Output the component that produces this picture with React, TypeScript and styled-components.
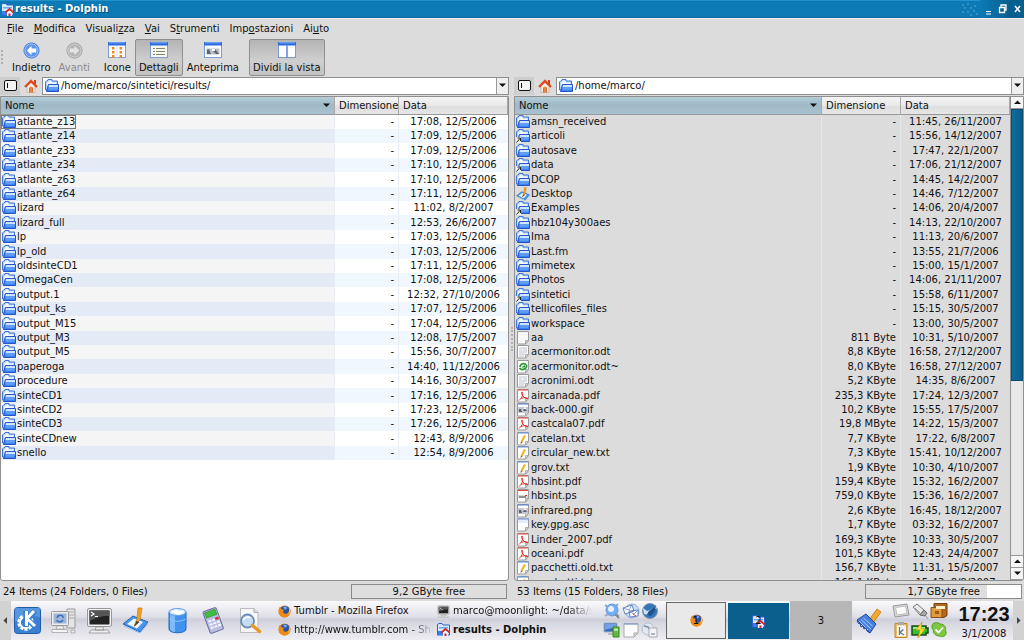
import React from 'react';
import styled, { createGlobalStyle, css } from 'styled-components';

const GlobalStyle = createGlobalStyle`
  *, *::before, *::after { box-sizing: border-box; }
  html, body { margin: 0; height: 100%; }
  #root { height: 100%; }
  body {
    background: #dcdcdc;
    color: #111;
    font: 10px/14px "DejaVu Sans", sans-serif;
    overflow: hidden;
  }
  button, input { font: inherit; color: inherit; }
  svg { display: block; flex: none; }
`;

const bare = css`
  appearance: none;
  border: 0;
  margin: 0;
  padding: 0;
  background: transparent;
`;

/* ---------- icons ---------- */

type IconProps = { size?: number };

const FolderIcon = ({ size = 14, link = false }: IconProps & { link?: boolean }) => (
  <svg width={size} height={size} viewBox="0 0 14 14">
    <path d="M.5 11V3L2 1.500h1V.5h4v1.500h5.500V11z" fill="#b4d6fb" stroke="#4274d8" />
    <path d="M2 3.500h1.500v-2h2.500l1 2h4.500V6H2z" fill="#f4faff" />
    <path d="M1.500 12.500 3.500 5.500h10v7z" fill="#3b82f4" stroke="#2454c8" />
    <path d="M4 6h9v2H3.500z" fill="#cfe5ff" />
    <path d="M3.500 8.500H13v1H3.300z" fill="#85b8fb" />
    <path d="M4 10.500h8" stroke="#5c9cf8" />
    {link && (
      <g>
        <path d="M0 8h5v6H0z" fill="#e8eefa" />
        <path d="M.5 13.500 4 9.500M1.500 9H4.500V12" stroke="#222" fill="none" />
      </g>
    )}
  </svg>
);

const PageBase = ({ children, fill = '#fff' }: { children?: React.ReactNode; fill?: string }) => (
  <svg width="14" height="14" viewBox="0 0 14 14">
    <path d="M1.500.5h11v9l-3 3.500h-8z" fill={fill} stroke="#9a9a9a" />
    <path d="M9.500 13V9.500h3z" fill="#d8d8d8" stroke="#9a9a9a" strokeWidth=".7" />
    {children}
  </svg>
);

const FileIcon = ({ kind }: { kind: string }) => {
  switch (kind) {
    case 'link':
      return <FolderIcon link />;
    case 'desktop':
      return <SketchIcon size={14} />;
    case 'plain':
      return <PageBase fill="#f8f8f8" />;
    case 'asc':
      return (
        <PageBase>
          <path d="M1 1h11.500" stroke="#8fa9d8" strokeWidth="1.500" />
          <path d="M2 2h10v3H2z" fill="#e6ecf8" />
        </PageBase>
      );
    case 'odt':
      return (
        <PageBase>
          <path d="M3 3h8M3 5h3M7 5h4M3 7h8M3 9h6M3 11h5" stroke="#b3bcc8" strokeWidth=".9" />
        </PageBase>
      );
    case 'backup':
      return (
        <PageBase>
          <path d="M4 7c0-3.500 5-4.500 6-2M10.500 5c1 4-5 6-7 3" stroke="#2b9a35" strokeWidth="1.700" fill="none" />
          <path d="M5 7.500h4V5z" fill="#2b9a35" />
        </PageBase>
      );
    case 'pdf':
      return (
        <PageBase>
          <path d="M2 1h10" stroke="#e0453a" />
          <path d="M3 11.500C5.500 9 7.500 6 6.500 3.500c-.5-1.500-1.500 0-.5 2S9.500 10 11.500 9.500c1-.8-3-1.500-6.500 0" stroke="#e02a20" fill="none" />
        </PageBase>
      );
    case 'image':
      return (
        <PageBase>
          <path d="M1.500 1h11" stroke="#4e7fd6" />
          <path d="M2 4h10v6H2z" fill="#c3c8d1" />
          <path d="M3 9V6h2l1 3zM7 8l1.500-3L11 8z" fill="#5a5f6c" />
          <path d="M8 4.500h2V6H8z" fill="#fff" />
        </PageBase>
      );
    case 'ps':
      return (
        <PageBase>
          <path d="M2 1.500h10" stroke="#e0453a" />
          <path d="M2 6h10v3H2z" fill="#dadada" />
          <path d="M3 8h7" stroke="#444" />
          <path d="M9 6.500h2" stroke="#d33" />
        </PageBase>
      );
    case 'text':
      return (
        <PageBase>
          <path d="M1.500 1h11" stroke="#5e8fe0" />
          <path d="M5.500 10 9 3.500" stroke="#f0b32a" strokeWidth="2.200" />
          <path d="M4.500 12 5 9.500l1.500 1z" fill="#7a5a2a" />
        </PageBase>
      );
    default:
      return <FolderIcon />;
  }
};

const DolphinIcon = ({ size = 13 }: IconProps) => (
  <svg width={size} height={size} viewBox="0 0 13 13">
    <path d="M.5 12V1.500L2 .5h3l1 1.500h6.500v10z" fill="#d7e8ff" stroke="#2b62d0" />
    <path d="M2 4h9v1.500H2z" fill="#6ea6f5" />
    <path d="M1 8h5v4H1z" fill="#3d7cf0" />
    <path d="M4.500 9.500 8.500 6l4 3.500" stroke="#d42a1e" strokeWidth="1.800" fill="none" />
    <path d="M6 9.500 8.500 7.500 11 9.500V13H6z" fill="#f5f5f5" />
    <path d="M7.500 10.500h2V13h-2z" fill="#c23" />
  </svg>
);

const HomeIcon = () => (
  <svg width="14" height="14" viewBox="0 0 14 14">
    <path d="M10 1h2v4h-2z" fill="#c5441f" />
    <path d="M3 7v6.500h8V7L7 3.500z" fill="#f4ede6" stroke="#b9a08e" strokeWidth=".6" />
    <path d="M1 8 7 2l6 6" stroke="#e0481c" strokeWidth="2.300" fill="none" />
    <path d="M5 13.500V9.500c0-2.500 4-2.500 4 0v4z" fill="#d9662a" />
    <path d="M7 8v5.500" stroke="#f5ab62" />
  </svg>
);

const PanelToggleIcon = () => (
  <svg width="13" height="11" viewBox="0 0 13 11">
    <rect x=".5" y=".5" width="12" height="10" rx="1.500" fill="#f4f4f4" stroke="#111" />
    <path d="M3.500 3v5" stroke="#111" />
  </svg>
);

const ArrowCircle = ({ forward = false }: { forward?: boolean }) => (
  <svg width="17" height="17" viewBox="0 0 18 18">
    <circle cx="9" cy="9" r="8" fill={forward ? '#b4b4b4' : '#5a94ee'} stroke={forward ? '#999' : '#3b6cd0'} />
    <circle cx="9" cy="9" r="7" fill="none" stroke={forward ? '#d6d6d6' : '#a9cbf9'} />
    <path
      d="M9 4 4 9l5 5v-3h5V7H9z"
      fill={forward ? '#e4e4e4' : '#fff'}
      transform={forward ? 'rotate(180 9 9)' : undefined}
    />
  </svg>
);

const ViewIcon = ({ mode }: { mode: 'icons' | 'details' | 'preview' | 'split' }) => (
  <svg width="18" height="17" viewBox="0 0 18 17">
    <rect x=".5" y=".5" width="17" height="15" fill={mode === 'details' ? '#f7f7ee' : '#fdfdff'} stroke="#7f9ccf" />
    <path d="M0 0h18v3.500H0z" fill="#2c6ae0" />
    <path d="M1 .8h16" stroke="#7fb0f8" />
    {mode === 'icons' && (
      <g fill="#ec8a22">
        {[5, 9, 13].map((y) => (
          <g key={y}>
            <path d={`M4 ${y}h2.500v2.500H4z`} />
            <path d={`M11.500 ${y}h2.500v2.500h-2.500z`} />
          </g>
        ))}
        <path d="M9 4v12" stroke="#cdd9ef" />
      </g>
    )}
    {mode === 'details' && (
      <path d="M3 6.500h2M6 6.500h9M3 9.500h2M6 9.500h9M3 12.500h2M6 12.500h9" stroke="#7b8570" strokeWidth="1.200" />
    )}
    {mode === 'preview' && (
      <g>
        <path d="M2.500 6.500h13v6h-13z" fill="#b9bec8" />
        <path d="M3 12V8l2-1 1 3 1 2zM9 9l2-2 4 5h-3z" fill="#5d6270" />
        <path d="M8 7h3v2H8z" fill="#fff" />
      </g>
    )}
    {mode === 'split' && <path d="M9 3.500V16" stroke="#5a86dc" strokeWidth="1.500" />}
  </svg>
);

const SketchIcon = ({ size = 27 }: IconProps) => (
  <svg width={size} height={size} viewBox="0 0 27 27">
    <path d="M1 17 11 9l15 6-8 10z" fill="#4a94ea" stroke="#2466b8" />
    <path d="M5 17l7-5.500 9 3.500-6 6.500z" fill="#eef7ff" />
    <path d="M2 19l16 7 8-9" stroke="#8cc2fa" fill="none" />
    <path d="M12 19 15 12 16 1h4l-2 12z" fill="#f2a122" stroke="#c87a12" strokeWidth=".7" />
    <path d="M12 20l2.500-6 3 1z" fill="#4b4038" />
  </svg>
);

const KMenuIcon = () => (
  <svg width="27" height="27" viewBox="0 0 27 27">
    <rect x=".5" y=".5" width="26" height="26" rx="3" fill="#3a7fd2" stroke="#215aa6" />
    <path d="M1 1h25v9C16 8 8 10 1 15z" fill="#6aa7e8" opacity=".6" />
    <circle cx="11.500" cy="15.500" r="7" fill="none" stroke="#fff" strokeWidth="2.500" strokeDasharray="3.200 1.200" />
    <circle cx="11.500" cy="15.500" r="5.500" fill="none" stroke="#fff" strokeWidth="1.800" />
    <path d="M12 4v16M21 4l-8 8 9 8" stroke="#3a7fd2" strokeWidth="5.500" fill="none" />
    <path d="M12.500 4v15M20 4l-7 7.500 8 7.500" stroke="#fff" strokeWidth="3" fill="none" />
  </svg>
);

const ComputerIcon = () => (
  <svg width="27" height="27" viewBox="0 0 27 27">
    <path d="M17 2h8v19h-8z" fill="#e4e4e4" stroke="#9b9b9b" />
    <path d="M18 5h6M18 8h6M18 11h6" stroke="#aaa" />
    <rect x="1.500" y="4.500" width="17" height="14" rx="1" fill="#ececec" stroke="#9b9b9b" />
    <path d="M3.500 6.500h13v10h-13z" fill="#9db6d8" />
    <path d="M7 11c1-4 7-3 6 0M13 13c-2 3-6 2-6 0" stroke="#3e6cb8" strokeWidth="1.500" fill="none" />
    <path d="M7 19h6l1 3H6zM2 22.500h15l1 3H2z" fill="#f3f3f3" stroke="#9b9b9b" strokeWidth=".7" />
    <path d="M21 23h4v3h-4z" fill="#e6e6e6" stroke="#9b9b9b" strokeWidth=".7" />
  </svg>
);

const TerminalIcon = ({ size = 27 }: IconProps) => (
  <svg width={size} height={size} viewBox="0 0 27 27">
    <rect x="1.500" y="1.500" width="24" height="18" rx="1.500" fill="#f0f0f0" stroke="#999" />
    <path d="M3.500 3.500h20v14h-20z" fill="#222" />
    <path d="M3.500 3.500h20V9c-9 0-14 2-20 5z" fill="#555" />
    <path d="M5 5l3 2-3 2M9 9.500h3" stroke="#fff" fill="none" strokeWidth="1.200" />
    <path d="M10 20h7l1 3H9zM5 23h17l2 3H3z" fill="#eee" stroke="#888" strokeWidth=".7" />
  </svg>
);

const TrashIcon = () => (
  <svg width="27" height="27" viewBox="0 0 27 27">
    <path d="M5 5v17c0 5 17 5 17 0V5z" fill="#3f93ee" stroke="#1e66c0" />
    <path d="M6 6v16c0 2 3 3 5 3V8z" fill="#8cc6ff" opacity=".8" />
    <ellipse cx="13.500" cy="5" rx="8.500" ry="3.500" fill="#cfe6fb" stroke="#5b9de0" />
    <path d="M7 5l5-3 3 2 4-1 1 3-6 2z" fill="#fff" />
    <path d="M5.500 12c4 3 12 3 16 0" stroke="#8cc6ff" fill="none" />
  </svg>
);

const CalculatorIcon = () => (
  <svg width="27" height="27" viewBox="0 0 27 27">
    <g transform="rotate(-20 13 13)">
      <rect x="6" y="2" width="14" height="23" rx="1.500" fill="#b9bfe2" stroke="#6a6f9c" />
      <path d="M7.500 3.500h11V9h-11z" fill="#3fbf3f" stroke="#2a8a2a" strokeWidth=".6" />
      <path d="M8 12h3v2H8zM12 12h3v2h-3zM8 15.500h3v2H8zM12 15.500h3v2h-3zM16 15.500h3v2h-3zM8 19h3v2H8zM12 19h3v2h-3zM16 19h3v2h-3z" fill="#f5f5ff" />
      <path d="M15.500 11.500h3.500v2.500h-3.500z" fill="#e22a3c" />
    </g>
  </svg>
);

const SearchIcon = () => (
  <svg width="27" height="27" viewBox="0 0 27 27">
    <path d="M4.500 1.500H18l4 4v20H4.500z" fill="#f7f7f9" stroke="#bbb" />
    <path d="M18 1.500v4h4" fill="#ddd" stroke="#aaa" />
    <circle cx="11.500" cy="14" r="6.500" fill="#c4dcf4" stroke="#6f8db0" strokeWidth="1.800" />
    <path d="M7.500 13c1-3 5-4 7-2" stroke="#fff" strokeWidth="1.500" fill="none" />
    <path d="M16.500 18.500l7 6" stroke="#e79a26" strokeWidth="3.500" strokeLinecap="round" />
  </svg>
);

const FirefoxIcon = () => (
  <svg width="13" height="13" viewBox="0 0 13 13">
    <circle cx="6.500" cy="6.500" r="6" fill="#e4700f" />
    <circle cx="7" cy="5" r="4" fill="#2553a8" />
    <path d="M5 2c2-1 4 0 4.500 1L7 5z" fill="#6ea6e6" />
    <path d="M.8 4 2 2l1 2 3 1-1 2 2 2 4-1 1.500-4C13 9 10 12.500 6.500 12.500S0 9 .8 4z" fill="#ef8a17" />
    <path d="M11 2.500c2 3 1.500 6-1 7.500 1-3 1.500-5 1-7.500z" fill="#f9c741" />
  </svg>
);

const KonquerorIcon = () => (
  <svg width="18" height="18" viewBox="0 0 18 18">
    <path d="M2 3l3 2M15 2l-3 3M2 14l3-2M16 14l-3-2" stroke="#8fa8cc" strokeWidth="2" />
    <circle cx="9" cy="8" r="6" fill="#72b0f2" stroke="#6a9ad8" />
    <circle cx="8" cy="7" r="3" fill="#e6f3ff" />
    <path d="M12 12l4 4" stroke="#888" strokeWidth="2" />
  </svg>
);
const MailIcon = () => (
  <svg width="18" height="18" viewBox="0 0 18 18">
    <circle cx="10" cy="9" r="7" fill="#c8e0f6" stroke="#8fb0d8" />
    <path d="M1 6l9-3 2 6-9 3zM7 9l9-1v6l-8 1z" fill="#f8f9ff" stroke="#4c6cae" strokeWidth=".8" />
    <path d="M1 6l6 2 3-5M7 9l5 3 4-4" stroke="#6a8ad0" fill="none" strokeWidth=".8" />
    <path d="M11 12l3 2" stroke="#d55" />
  </svg>
);
const BirdIcon = () => (
  <svg width="18" height="18" viewBox="0 0 18 18">
    <circle cx="9" cy="9" r="7.500" fill="#3676b8" stroke="#7b95ae" />
    <path d="M2 6l4 3 3-1 6-5 1 3-5 3-3 4-5-1z" fill="#cfe2f4" />
    <path d="M7 10l8-7-1 6-4 5-4-1z" fill="#20548c" />
  </svg>
);
const MonitorsIcon = () => (
  <svg width="18" height="18" viewBox="0 0 18 18">
    <path d="M1 2h13v9H1z" fill="#3469b8" stroke="#a7b4c6" />
    <path d="M2 3h11v3L2 9z" fill="#6fa2e4" />
    <path d="M5 12h5v2H5z" fill="#bbb" />
    <path d="M10 6h6v10h-6z" fill="#61b83c" stroke="#3c8824" />
    <path d="M11 7.500h4V10h-4z" fill="#b6e89c" />
  </svg>
);
const NoteIcon = () => (
  <svg width="18" height="18" viewBox="0 0 18 18">
    <path d="M2 2.500h14V12l-4 4H2z" fill="#fcfcfc" stroke="#aaa" />
    <path d="M2 3h14" stroke="#8ba6cc" strokeWidth="1.500" />
    <path d="M12 16v-4h4z" fill="#ddd" stroke="#aaa" />
  </svg>
);
const OfficeIcon = () => (
  <svg width="18" height="18" viewBox="0 0 18 18">
    <circle cx="7" cy="8" r="6" fill="#e2e8ee" stroke="#b5c0cc" />
    <path d="M3 5l4 1 2 3 3-1" stroke="#7890ac" strokeWidth="1.500" fill="none" />
    <path d="M8 7h8v9H8z" fill="#f4f4f4" stroke="#aaa" />
    <path d="M10 12h4v2h-4z" fill="#aab6c4" />
  </svg>
);

const BroomIcon = () => (
  <svg width="27" height="27" viewBox="0 0 27 27">
    <path d="M14 13 22 2l4 3-8 11z" fill="#f2a82a" stroke="#bf7b12" strokeWidth=".8" />
    <path d="M2 13 11 7l10 10-6 9z" fill="#4a80de" stroke="#1e469e" />
    <path d="M4 14l9 9M6 12.500l10 9.500M8.500 11l9 8" stroke="#a9caf8" />
    <path d="M2 14l2 3 1-1 1 4 2-1 1 3 2-1 1 3 3 2" stroke="#1e469e" fill="none" />
  </svg>
);
const TabletIcon = () => (
  <svg width="18" height="18" viewBox="0 0 18 18">
    <path d="M1 4l14-2 2 11-14 2z" fill="#ddd" stroke="#999" />
    <path d="M3.500 5.500l10-1.500 1.500 7.500-10 1.500z" fill="#fcfcfc" stroke="#bbb" />
  </svg>
);
const PlugIcon = () => (
  <svg width="18" height="18" viewBox="0 0 18 18">
    <path d="M2 5l4-3 7 6-4 5z" fill="#e9e9e9" stroke="#777" />
    <path d="M9 13l4-5 3 3-2 3z" fill="#aaa" stroke="#666" />
    <path d="M4 6l5 5M15 14l2 3" stroke="#999" />
  </svg>
);
const WalletIcon = () => (
  <svg width="18" height="18" viewBox="0 0 18 18">
    <path d="M4 1.500h13v12l-3 2H4z" fill="#b8671a" stroke="#744010" />
    <path d="M1 5.500h11v10H1z" fill="#e39a3c" stroke="#8a5116" />
    <path d="M6 4h9v3H6z" fill="#fff1cf" />
    <path d="M5 9h4v3H5z" fill="#9c5b17" />
  </svg>
);
const ClipboardIcon = () => (
  <svg width="18" height="18" viewBox="0 0 18 18">
    <path d="M3 2.500h12v14H3z" fill="#efbd62" stroke="#bd8627" />
    <path d="M5 4.500h9v11H5z" fill="#fafafa" />
    <path d="M6 1h6v3H6z" fill="#aaa" />
    <path d="M7.500 6v8M11.500 8.500l-3.500 3 4 2.500" stroke="#66748c" strokeWidth="1.300" fill="none" />
  </svg>
);
const BatteryIcon = () => (
  <svg width="18" height="18" viewBox="0 0 18 18">
    <path d="M1 5h14v2h2v5h-2v2H1z" fill="#37c02d" stroke="#1b4d18" strokeWidth="1.500" />
    <path d="M2 6h12v2H2z" fill="#9aec8a" />
    <path d="M11 1 5 9h4l-2 8 7-9h-4z" fill="#ffe136" stroke="#c29212" strokeWidth=".7" />
  </svg>
);
const SkypeIcon = () => (
  <svg width="18" height="18" viewBox="0 0 18 18">
    <path d="M2 5c0-4 6-4 8-2 5 0 6 4 5.500 6.500C18 14 13 17 10 15 5 15 3 12 3.500 9 2 8 2 6 2 5z" fill="#7cc840" stroke="#55a022" />
    <path d="M5.500 8.500l3 3 4.500-5" stroke="#fff" strokeWidth="1.800" fill="none" />
  </svg>
);

const Sparkles = () => (
  <svg width="18" height="14" viewBox="0 0 18 14">
    <path
      d="M1 2h2v2H1zM6 1h2v2H6zM3 5h2v2H3zM9 5h2v2H9zM13 3h2v2h-2zM1 9h2v2H1zM6 9h2v2H6zM12 8h2v2h-2zM15 11h2v2h-2zM9 12h2v2H9z"
      fill="#3c9cc8"
      opacity=".7"
    />
  </svg>
);

const Triangle = ({ dir = 'down' }: { dir?: 'down' | 'up' | 'left' | 'right' }) => {
  const d = { down: 'M0 1.500h7L3.500 5z', up: 'M0 5h7L3.500 1.500z', left: 'M5 0v7L1.500 3.500z', right: 'M2 0v7l3.500-3.500z' }[dir];
  return (
    <svg width="7" height="7" viewBox="0 0 7 7">
      <path d={d} fill="currentColor" />
    </svg>
  );
};

/* ---------- window frame ---------- */

const Desktop = styled.div`
  display: flex;
  flex-direction: column;
  height: 100vh;
`;

const TitleBar = styled.header`
  display: flex;
  align-items: center;
  flex: none;
  height: 18px;
  padding-left: 1px;
  gap: 1px;
  background: linear-gradient(#2192cb 0 1px, #0c7bb5 1px 16px, #0a6ba0);
  color: #fff;
`;

const Title = styled.h1`
  flex: 1;
  margin: 0;
  font-size: 10px;
  line-height: 16px;
  text-shadow: 1px 1px 0 #0a4f76;
`;

const WindowButtons = styled.div`
  display: flex;
  align-items: center;
  align-self: stretch;
  padding: 0 2px 0 4px;
  gap: 4px;
  background: linear-gradient(90deg, #0c7bb5, #075f90 30px);
`;

const WindowButton = styled.button`
  ${bare}
  width: 10px;
  height: 12px;
`;

const MenuBar = styled.nav`
  display: flex;
  flex: none;
  height: 20px;
  padding-left: 2px;
  border-top: 1px solid #efefef;
`;

const MenuItem = styled.button`
  ${bare}
  padding: 0 5px;
`;

const ToolBar = styled.div`
  display: flex;
  flex: none;
  height: 38px;
  padding: 1px 0 0 1px;
`;

const Grip = styled.span`
  width: 7px;
  height: 14px;
  margin-top: 11px;
  border-left: 2px dotted #b0b0b0;
`;

const ToolButton = styled.button<{ $active?: boolean; $muted?: boolean; $spaced?: boolean }>`
  ${bare}
  display: flex;
  flex-direction: column;
  align-items: center;
  height: 37px;
  padding: 2px 3px 0;
  gap: 3px;
  border: 1px solid transparent;
  border-radius: 2px;
  line-height: 12px;
  margin-left: ${(p) => (p.$spaced ? '6px' : '0')};
  color: ${(p) => (p.$muted ? '#8a8a8a' : '#111')};
  ${(p) =>
    p.$active &&
    css`
      border-color: #8e8e8e;
      background: linear-gradient(#b4b4b4, #cfcfcf 60%, #c2c2c2);
    `}
`;

/* ---------- panes ---------- */

const Panes = styled.main`
  display: grid;
  grid-template-columns: minmax(0, 509fr) 5px minmax(0, 510fr);
  flex: 1;
  min-height: 0;
`;

const Splitter = styled.div`
  display: flex;
  align-items: center;
  justify-content: center;
  &::before {
    content: '';
    height: 24px;
    border-left: 2px dotted #b0b0b0;
  }
`;

const Pane = styled.section`
  display: flex;
  flex-direction: column;
  min-height: 0;
`;

const PathBar = styled.div`
  display: flex;
  align-items: center;
  flex: none;
  height: 20px;
  padding-bottom: 1px;
`;

const SquareButton = styled.button<{ $pressed?: boolean }>`
  ${bare}
  display: flex;
  align-items: center;
  justify-content: center;
  width: ${(p) => (p.$pressed ? '20px' : '22px')};
  height: 18px;
  background: ${(p) => (p.$pressed ? '#cecece' : 'transparent')};
`;

const PathField = styled.label`
  display: flex;
  align-items: center;
  flex: 1;
  height: 18px;
  padding-left: 2px;
  gap: 2px;
  border: 1px solid #8f8f8f;
  background: #fff;
`;

const PathInput = styled.input`
  ${bare}
  flex: 1;
  min-width: 0;
  line-height: 14px;
`;

const DropButton = styled.button`
  ${bare}
  display: flex;
  align-items: center;
  justify-content: center;
  align-self: stretch;
  width: 12px;
  border-left: 1px solid #999;
  background: #efefef;
`;

const ListFrame = styled.div<{ $inactive?: boolean }>`
  display: flex;
  flex: 1;
  min-height: 0;
  border: 1px solid #8f8f8f;
  border-radius: 0 0 3px 3px;
  background: ${(p) => (p.$inactive ? '#dcdcdc' : '#fff')};
`;

const TableArea = styled.div`
  flex: 1;
  min-width: 0;
  overflow: hidden;
`;

const FileTable = styled.table<{ $inactive?: boolean }>`
  width: 100%;
  table-layout: fixed;
  border-collapse: separate;
  border-spacing: 0;
  white-space: nowrap;

  td {
    height: 14px;
    padding: 0;
    overflow: hidden;
    border-right: 1px solid ${(p) => (p.$inactive ? '#e6e6e6' : '#e9eef4')};
    line-height: 14px;
  }
  td:last-child { border-right: 0; }
  tbody tr:nth-child(5n + 3) td,
  tbody tr:nth-child(5n + 5) td { height: 15px; }

  ${(p) =>
    !p.$inactive &&
    css`
      td:first-child { background: #f5f5f5; }
      tbody tr:nth-child(even) td { background: #f0f7ff; }
      tbody tr:nth-child(even) td:first-child { background: #e4ebf6; }
    `}
`;

const HeadCell = styled.th<{ $sorted?: boolean }>`
  height: 18px;
  padding: 0 ${(p) => (p.$sorted ? '4px' : '0')} 0 4px;
  border-right: 1px solid #a8a8a8;
  border-bottom: 1px solid #989898;
  background: ${(p) =>
    p.$sorted
      ? 'linear-gradient(#b4ccd8, #9fb9c7 45%, #a9c2cf)'
      : 'linear-gradient(#f4f4f4, #e9e9e9 50%, #dedede 55%, #e6e6e6)'};
  font-weight: normal;
  line-height: 14px;
  text-align: left;
`;

const HeadLabel = styled.span`
  display: flex;
  align-items: center;
  justify-content: space-between;
`;

const NameCell = styled.span<{ $focused?: boolean }>`
  display: inline-flex;
  align-items: center;
  height: 14px;
  padding: 0 1px;
  gap: 1px;
  vertical-align: top;
  outline: ${(p) => (p.$focused ? '1px solid #777' : '0')};
  outline-offset: -1px;
`;

const SizeCell = styled.td`
  && { padding-right: 4px; }
  text-align: right;
`;

const DateCell = styled.td`
  text-align: center;
`;

const ScrollBar = styled.div`
  display: flex;
  flex-direction: column;
  width: 13px;
  border-left: 1px solid #8f8f8f;
  background: #e8e8e8;
`;

const ScrollButton = styled.button`
  ${bare}
  display: flex;
  align-items: center;
  justify-content: center;
  flex: none;
  height: 12px;
  border-bottom: 1px solid #999;
  background: #f6f6f6;
`;

const ScrollTrack = styled.div`
  flex: 1;
  border-bottom: 1px solid #999;
`;

const ScrollThumb = styled.div`
  height: 61%;
  border: 1px solid #084a70;
  background: linear-gradient(90deg, #0f6d9f, #0a5c8a);
`;

const StatusBar = styled.footer`
  display: flex;
  align-items: center;
  justify-content: space-between;
  flex: none;
  height: 20px;
  padding: 1px 2px 0 3px;
`;

const FreeSpace = styled.div`
  position: relative;
  width: 31%;
  height: 15px;
  border: 1px solid #8a8a8a;
  background: #fff;
  line-height: 13px;
  text-align: center;
`;

const FreeFill = styled.div`
  height: 13px;
  background: #dedede;
`;

const FreeLabel = styled.span`
  position: absolute;
  inset: 0;
`;

/* ---------- desktop panel ---------- */

const Panel = styled.footer`
  display: flex;
  flex: none;
  height: 39px;
  background: linear-gradient(#fafafc, #dfdfe8 40%, #cfcfdc 48%, #d9d9e2 60%, #ededf2);
`;

const HideButton = styled.button`
  ${bare}
  display: flex;
  align-items: center;
  justify-content: center;
  flex: none;
  width: 11px;
  background: #d2d2d2;
  color: #444;
`;

const Launchers = styled.div`
  display: flex;
  align-items: center;
  flex: none;
  padding: 0 3px;
  gap: 9px;
`;

const LaunchButton = styled.button<{ $spaced?: boolean }>`
  ${bare}
  margin-left: ${(p) => (p.$spaced ? '6px' : '0')};
`;

const Tasks = styled.div`
  display: grid;
  grid-template-columns: 1fr 1fr;
  align-content: space-evenly;
  flex: 1;
  min-width: 0;
  padding-left: 12px;
`;

const Task = styled.button<{ $active?: boolean; $fade?: boolean }>`
  ${bare}
  display: flex;
  align-items: center;
  min-width: 0;
  height: 17px;
  gap: 3px;
  overflow: hidden;
  font-weight: ${(p) => (p.$active ? 'bold' : 'normal')};
  white-space: nowrap;
  ${(p) => p.$fade && 'mask-image: linear-gradient(90deg, #000 82%, transparent 98%);'}
`;

const IconGrid = styled.div`
  display: grid;
  grid-template-columns: repeat(3, 18px);
  align-content: center;
  flex: none;
  gap: 1px;
  padding: 0 7px;
`;

const Pager = styled.div`
  display: grid;
  grid-template-columns: repeat(3, 62px);
  flex: none;
`;

const PagerDesk = styled.button<{ $tone: 'window' | 'current' | 'empty' }>`
  ${bare}
  position: relative;
  display: flex;
  align-items: center;
  justify-content: center;
  ${(p) =>
    ({
      window: 'margin: 1px 2px 1px 0; border: 1px solid #666; background: #e9e9e9;',
      current: 'margin: 2px 1px 1px 0; background: #0a5f8c;',
      empty: 'background: #b7b7b7;',
    })[p.$tone]}
`;

const DeskNumber = styled.span`
  position: absolute;
  inset: 0;
  display: flex;
  align-items: center;
  justify-content: center;
`;

const Clock = styled.time`
  display: flex;
  flex-direction: column;
  align-items: center;
  flex: none;
  width: 58px;
`;

const ClockTime = styled.span`
  font: bold 20px/27px "Liberation Sans", sans-serif;
`;

const ClockDate = styled.span`
  line-height: 12px;
`;

/* ---------- data ---------- */

type Entry = { name: string; size: string; date: string; kind: string };

const parse = (rows: string): Entry[] =>
  rows
    .trim()
    .split('\n')
    .map((row) => {
      const [name, size, date, kind = 'folder'] = row.trim().split('|');
      return { name, size, date, kind };
    });

const results = parse(`
  atlante_z13|-|17:08, 12/5/2006
  atlante_z14|-|17:09, 12/5/2006
  atlante_z33|-|17:09, 12/5/2006
  atlante_z34|-|17:10, 12/5/2006
  atlante_z63|-|17:10, 12/5/2006
  atlante_z64|-|17:11, 12/5/2006
  lizard|-|11:02, 8/2/2007
  lizard_full|-|12:53, 26/6/2007
  lp|-|17:03, 12/5/2006
  lp_old|-|17:03, 12/5/2006
  oldsinteCD1|-|17:11, 12/5/2006
  OmegaCen|-|17:08, 12/5/2006
  output.1|-|12:32, 27/10/2006
  output_ks|-|17:07, 12/5/2006
  output_M15|-|17:04, 12/5/2006
  output_M3|-|12:08, 17/5/2007
  output_M5|-|15:56, 30/7/2007
  paperoga|-|14:40, 11/12/2006
  procedure|-|14:16, 30/3/2007
  sinteCD1|-|17:16, 12/5/2006
  sinteCD2|-|17:23, 12/5/2006
  sinteCD3|-|17:26, 12/5/2006
  sinteCDnew|-|12:43, 8/9/2006
  snello|-|12:54, 8/9/2006
`);

const home = parse(`
  amsn_received|-|11:45, 26/11/2007
  articoli|-|15:56, 14/12/2007|link
  autosave|-|17:47, 22/1/2007
  data|-|17:06, 21/12/2007|link
  DCOP|-|14:45, 14/2/2007
  Desktop|-|14:46, 7/12/2007|desktop
  Examples|-|14:06, 20/4/2007|link
  hbz104y300aes|-|14:13, 22/10/2007
  Ima|-|11:13, 20/6/2007
  Last.fm|-|13:55, 21/7/2006
  mimetex|-|15:00, 15/1/2007
  Photos|-|14:06, 21/11/2007
  sintetici|-|15:58, 6/11/2007|link
  tellicofiles_files|-|15:15, 30/5/2007
  workspace|-|13:00, 30/5/2007
  aa|811 Byte|10:31, 5/10/2007|plain
  acermonitor.odt|8,8 KByte|16:58, 27/12/2007|odt
  acermonitor.odt~|8,0 KByte|16:58, 27/12/2007|backup
  acronimi.odt|5,2 KByte|14:35, 8/6/2007|odt
  aircanada.pdf|235,3 KByte|17:24, 12/3/2007|pdf
  back-000.gif|10,2 KByte|15:55, 17/5/2007|image
  castcala07.pdf|19,8 MByte|14:22, 15/3/2007|pdf
  catelan.txt|7,7 KByte|17:22, 6/8/2007|text
  circular_new.txt|7,3 KByte|15:41, 10/12/2007|text
  grov.txt|1,9 KByte|10:30, 4/10/2007|text
  hbsint.pdf|159,4 KByte|15:32, 16/2/2007|pdf
  hbsint.ps|759,0 KByte|15:36, 16/2/2007|ps
  infrared.png|2,6 KByte|16:45, 18/12/2007|image
  key.gpg.asc|1,7 KByte|03:32, 16/2/2007|asc
  Linder_2007.pdf|169,3 KByte|10:33, 30/5/2007|pdf
  oceani.pdf|101,5 KByte|12:43, 24/4/2007|pdf
  pacchetti.old.txt|156,7 KByte|11:31, 15/5/2007|text
  pacchetti.txt|165,1 KByte|15:43, 8/8/2007|text
`);

const menus: [string, string, string][] = [
  ['', 'F', 'ile'],
  ['', 'M', 'odifica'],
  ['Visuali', 'z', 'za'],
  ['', 'V', 'ai'],
  ['S', 't', 'rumenti'],
  ['Imp', 'o', 'stazioni'],
  ['Ai', 'u', 'to'],
];

/* ---------- composed parts ---------- */

type FilePaneProps = {
  path: string;
  entries: Entry[];
  sizeWidth: number;
  status: string;
  free: string;
  used: number;
  inactive?: boolean;
};

const FilePane = ({ path, entries, sizeWidth, status, free, used, inactive }: FilePaneProps) => (
  <Pane aria-label={path}>
    <PathBar>
      <SquareButton $pressed aria-label="Modifica percorso">
        <PanelToggleIcon />
      </SquareButton>
      <SquareButton aria-label="Home">
        <HomeIcon />
      </SquareButton>
      <PathField>
        <FolderIcon />
        <PathInput aria-label="Percorso" defaultValue={path} />
        <DropButton aria-label="Cronologia">
          <Triangle />
        </DropButton>
      </PathField>
    </PathBar>
    <ListFrame $inactive={inactive}>
      <TableArea>
        <FileTable $inactive={inactive}>
          <colgroup>
            <col />
            <col width={sizeWidth} />
            <col width={109} />
          </colgroup>
          <thead>
            <tr>
              <HeadCell $sorted>
                <HeadLabel>
                  Nome <Triangle />
                </HeadLabel>
              </HeadCell>
              <HeadCell>Dimensione</HeadCell>
              <HeadCell>Data</HeadCell>
            </tr>
          </thead>
          <tbody>
            {entries.map((entry, i) => (
              <tr key={entry.name}>
                <td>
                  <NameCell $focused={!inactive && i === 0}>
                    <FileIcon kind={entry.kind} />
                    {entry.name}
                  </NameCell>
                </td>
                <SizeCell>{entry.size}</SizeCell>
                <DateCell>{entry.date}</DateCell>
              </tr>
            ))}
          </tbody>
        </FileTable>
      </TableArea>
      {inactive && (
        <ScrollBar>
          <ScrollButton aria-label="Su">
            <Triangle dir="up" />
          </ScrollButton>
          <ScrollTrack>
            <ScrollThumb />
          </ScrollTrack>
          <ScrollButton aria-label="Pagina su">
            <Triangle dir="up" />
          </ScrollButton>
          <ScrollButton aria-label="Giù">
            <Triangle />
          </ScrollButton>
        </ScrollBar>
      )}
    </ListFrame>
    <StatusBar>
      <span>{status}</span>
      <FreeSpace>
        <FreeFill style={{ width: `${used}%` }} />
        <FreeLabel>{free}</FreeLabel>
      </FreeSpace>
    </StatusBar>
  </Pane>
);

export default function App() {
  return (
    <Desktop>
      <GlobalStyle />
      <TitleBar>
        <DolphinIcon />
        <Title>results - Dolphin</Title>
        <Sparkles />
        <WindowButtons>
          <WindowButton aria-label="Riduci">
            <svg width="10" height="12" viewBox="0 0 10 12">
              <path d="M2 8.500h5M2 11h5" stroke="#fff" />
            </svg>
          </WindowButton>
          <WindowButton aria-label="Ripristina">
            <svg width="10" height="12" viewBox="0 0 10 12">
              <path d="M3 4V2h5v5H6M1.500 4.500h5v5h-5z" stroke="#fff" strokeWidth="1.300" fill="none" />
            </svg>
          </WindowButton>
          <WindowButton aria-label="Chiudi">
            <svg width="10" height="12" viewBox="0 0 10 12">
              <path d="M3 3l5 6M8 3 3 9" stroke="#fff" strokeWidth="1.500" />
            </svg>
          </WindowButton>
        </WindowButtons>
      </TitleBar>

      <MenuBar>
        {menus.map(([before, key, after]) => (
          <MenuItem key={before + key + after}>
            {before}
            <u>{key}</u>
            {after}
          </MenuItem>
        ))}
      </MenuBar>

      <ToolBar role="toolbar">
        <Grip />
        <ToolButton>
          <ArrowCircle />
          Indietro
        </ToolButton>
        <ToolButton $muted>
          <ArrowCircle forward />
          Avanti
        </ToolButton>
        <ToolButton $spaced>
          <ViewIcon mode="icons" />
          Icone
        </ToolButton>
        <ToolButton $active>
          <ViewIcon mode="details" />
          Dettagli
        </ToolButton>
        <ToolButton>
          <ViewIcon mode="preview" />
          Anteprima
        </ToolButton>
        <ToolButton $active $spaced>
          <ViewIcon mode="split" />
          Dividi la vista
        </ToolButton>
      </ToolBar>

      <Panes>
        <FilePane
          path="/home/marco/sintetici/results/"
          entries={results}
          sizeWidth={64}
          status="24 Items (24 Folders, 0 Files)"
          free="9,2 GByte free"
          used={100}
        />
        <Splitter />
        <FilePane
          path="/home/marco/"
          entries={home}
          sizeWidth={79}
          status="53 Items (15 Folders, 38 Files)"
          free="1,7 GByte free"
          used={78}
          inactive
        />
      </Panes>

      <Panel>
        <HideButton aria-label="Nascondi a sinistra">
          <Triangle dir="left" />
        </HideButton>
        <Launchers>
          <LaunchButton aria-label="Menu K"><KMenuIcon /></LaunchButton>
          <LaunchButton aria-label="Sistema"><ComputerIcon /></LaunchButton>
          <LaunchButton aria-label="Terminale"><TerminalIcon /></LaunchButton>
          <LaunchButton aria-label="Desktop"><SketchIcon /></LaunchButton>
          <LaunchButton aria-label="Cestino" $spaced><TrashIcon /></LaunchButton>
          <LaunchButton aria-label="Calcolatrice"><CalculatorIcon /></LaunchButton>
          <LaunchButton aria-label="Cerca"><SearchIcon /></LaunchButton>
        </Launchers>
        <Tasks>
          <Task><FirefoxIcon />Tumblr - Mozilla Firefox</Task>
          <Task $fade><TerminalIcon size={13} />marco@moonlight: ~/data/sintetici</Task>
          <Task $fade><FirefoxIcon />http://www.tumblr.com - Share</Task>
          <Task $active><DolphinIcon />results - Dolphin</Task>
        </Tasks>
        <IconGrid>
          <KonquerorIcon />
          <MailIcon />
          <BirdIcon />
          <MonitorsIcon />
          <NoteIcon />
          <OfficeIcon />
        </IconGrid>
        <Pager>
          <PagerDesk $tone="window" aria-label="Desktop 1">
            <FirefoxIcon />
            <DeskNumber>1</DeskNumber>
          </PagerDesk>
          <PagerDesk $tone="current" aria-label="Desktop 2">
            <DolphinIcon />
            <DeskNumber>2</DeskNumber>
          </PagerDesk>
          <PagerDesk $tone="empty">3</PagerDesk>
        </Pager>
        <Launchers>
          <LaunchButton aria-label="Pulisci"><BroomIcon /></LaunchButton>
        </Launchers>
        <IconGrid>
          <TabletIcon />
          <PlugIcon />
          <WalletIcon />
          <ClipboardIcon />
          <BatteryIcon />
          <SkypeIcon />
        </IconGrid>
        <Clock>
          <ClockTime>17:23</ClockTime>
          <ClockDate>3/1/2008</ClockDate>
        </Clock>
        <HideButton aria-label="Nascondi a destra">
          <Triangle dir="right" />
        </HideButton>
      </Panel>
    </Desktop>
  );
}
